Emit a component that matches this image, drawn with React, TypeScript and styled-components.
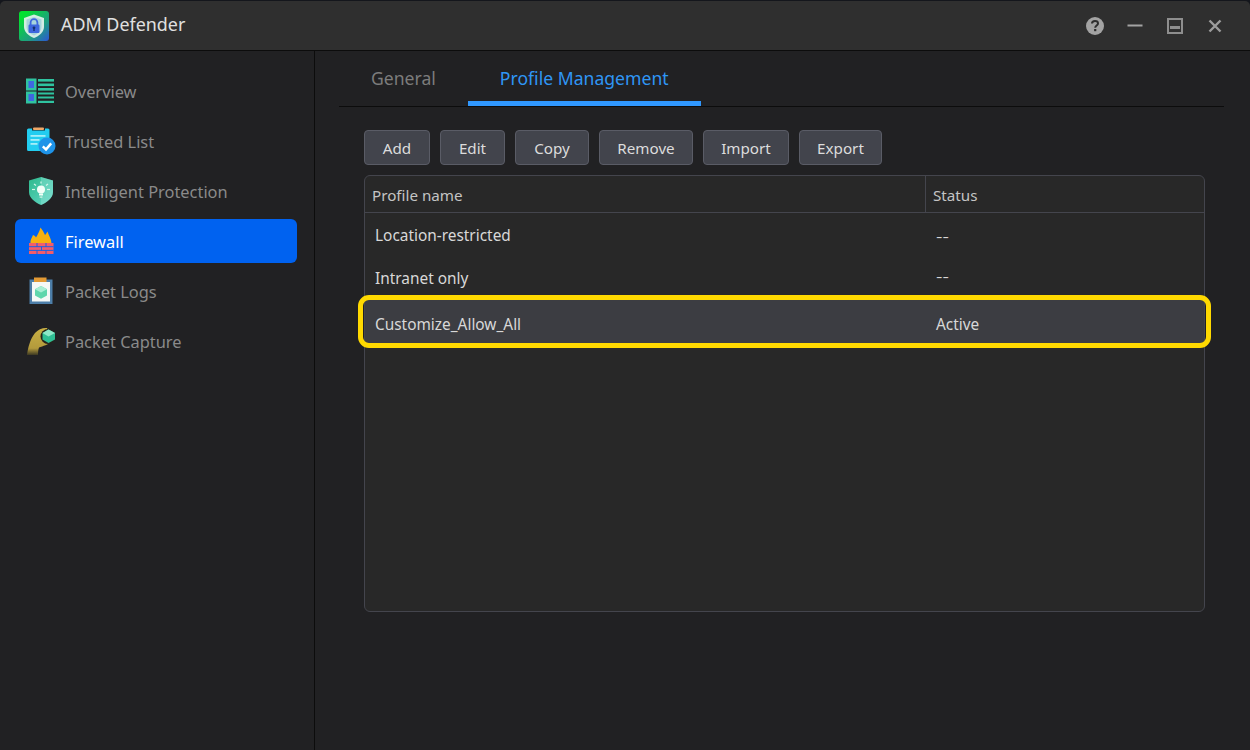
import React from 'react';
import styled, { createGlobalStyle } from 'styled-components';

const GlobalStyle = createGlobalStyle`
  html, body {
    margin: 0;
    padding: 0;
    background: #14161c;
  }
  body {
    font-family: "Noto Sans", "Open Sans", sans-serif;
  }
  * {
    box-sizing: border-box;
  }
`;

const AppLogo = () => (
  <svg width="30" height="30" viewBox="0 0 30 30">
    <defs>
      <linearGradient id="logoBg" x1="0" y1="0" x2="1" y2="1">
        <stop offset="0.15" stopColor="#03e032" />
        <stop offset="0.65" stopColor="#1f9c82" />
        <stop offset="1" stopColor="#2b55d6" />
      </linearGradient>
    </defs>
    <rect width="30" height="30" rx="3" fill="url(#logoBg)" />
    <path d="M15 3.500 L25 7 V16 C25 21 20 25 15 27 C10 25 5 21 5 16 V7 Z" fill="#e4f2ee" opacity="0.92" />
    <path d="M15 6 L22.500 8.600 V16 C22.500 19.800 19 22.800 15 24.400 C11 22.800 7.500 19.800 7.500 16 V8.600 Z" fill="#a8d4dc" />
    <path d="M11.600 14 V11.600 A3.400 3.400 0 0 1 18.400 11.600 V14" fill="none" stroke="#3e66de" strokeWidth="1.800" />
    <rect x="9.500" y="13.500" width="11" height="8.500" rx="1.200" fill="#3e66de" />
    <circle cx="15" cy="16.800" r="1.400" fill="#16306f" />
    <rect x="14.300" y="17" width="1.400" height="3" fill="#16306f" />
  </svg>
);

const OverviewIcon = () => (
  <svg width="30" height="26" viewBox="1 0 30 26">
    <rect x="1" y="0.500" width="10.500" height="12" fill="#2fc3a0" />
    <rect x="3.500" y="3" width="5.500" height="7" fill="#3f67e0" />
    <rect x="1" y="13.500" width="10.500" height="12" fill="#2fc3a0" />
    <rect x="3.500" y="16" width="5.500" height="7" fill="#3f67e0" />
    <g fill="#2fc3a0">
      <rect x="13" y="1" width="16" height="2.600" />
      <rect x="13" y="5.500" width="16" height="2.600" />
      <rect x="13" y="10" width="16" height="2.600" />
      <rect x="13" y="14.500" width="16" height="2" />
      <rect x="13" y="18.500" width="16" height="2" />
      <rect x="13" y="22.800" width="16" height="2.200" />
    </g>
  </svg>
);

const TrustedIcon = () => (
  <svg width="30" height="28" viewBox="0 0 30 28">
    <path d="M1 3 Q1 1.500 2.500 1.500 H6 V3.500 H19 V1.500 H22 Q23.500 1.500 23.500 3 V24 H2.500 Q1 24 1 22.500 Z" fill="#22cdf0" />
    <rect x="7" y="0.500" width="11" height="2.500" rx="1" fill="#f0a868" />
    <g fill="#a6eef8">
      <rect x="4.500" y="8" width="15" height="1.800" />
      <rect x="4.500" y="12" width="9" height="1.800" />
      <rect x="4.500" y="16" width="7" height="1.800" />
    </g>
    <circle cx="21" cy="19" r="8.500" fill="#1e93e8" />
    <path d="M16.800 19.300 L20 22.400 L25.200 16.400" fill="none" stroke="#fff" strokeWidth="2.400" />
  </svg>
);

const ProtectionIcon = () => (
  <svg width="28" height="30" viewBox="0 0 28 30">
    <defs>
      <linearGradient id="shieldFill" x1="0" y1="0" x2="1" y2="1">
        <stop offset="0" stopColor="#2eb98c" />
        <stop offset="1" stopColor="#66d8c8" />
      </linearGradient>
    </defs>
    <path d="M14 1 L26 4.500 V16 C26 22 20 26.500 14 29 C8 26.500 2 22 2 16 V4.500 Z" fill="url(#shieldFill)" />
    <path d="M14 1 L26 4.500 V16 C26 22 20 26.500 14 29 Z" fill="#9fe8dc" opacity="0.35" />
    <circle cx="14" cy="13.500" r="4" fill="#f2fff8" />
    <rect x="12" y="17.500" width="4" height="2" fill="#f2fff8" />
    <rect x="12.600" y="20.500" width="2.800" height="1.200" fill="#d6f5ea" />
    <g stroke="#d6f5ea" strokeWidth="1.200">
      <path d="M14 5.500 V7.500" />
      <path d="M5 13.500 H8" />
      <path d="M20 13.500 H23" />
      <path d="M7 8 L9 9.500" />
      <path d="M21 8 L19 9.500" />
    </g>
  </svg>
);

const FirewallIcon = () => (
  <svg width="28" height="28" viewBox="0 0 28 28">
    <path d="M3.500 16.500 C3 13 5 11 6 8 C7.500 8.500 8.500 9.500 9 10.500 C10.500 8 12.500 4.500 13.500 0.500 C15.500 3 17 5.500 18 8 C19 7 20 5.500 20.500 4.500 C21.500 8 24.500 12 24.500 16.500 Z" fill="#f7b00e" />
    <rect x="2" y="16" width="24.500" height="11" fill="#f25c6a" />
    <g stroke="#0062f0" strokeWidth="0.900">
      <path d="M2 19.700 H26.500" />
      <path d="M2 23.400 H26.500" />
      <path d="M10 16 V19.700" />
      <path d="M19 16 V19.700" />
      <path d="M14.500 19.700 V23.400" />
      <path d="M10 23.400 V27" />
      <path d="M19 23.400 V27" />
    </g>
  </svg>
);

const LogsIcon = () => (
  <svg width="26" height="28" viewBox="0 0 26 28">
    <rect x="1.500" y="2.500" width="23" height="24.500" fill="#4d7ea8" />
    <rect x="4" y="5" width="18" height="19.500" fill="#f5f8f6" />
    <rect x="6" y="0.500" width="12.500" height="4.500" fill="#e39a34" />
    <path d="M13 9 L19 12.200 V18.500 L13 21.800 L7 18.500 V12.200 Z" fill="#5fd6ac" />
    <path d="M13 9 L19 12.200 L13 15.400 L7 12.200 Z" fill="#a8eed4" />
  </svg>
);

const CaptureIcon = () => (
  <svg width="30" height="30" viewBox="0 0 30 30">
    <defs>
      <linearGradient id="handFill" x1="0" y1="0" x2="0" y2="1">
        <stop offset="0" stopColor="#c9b044" />
        <stop offset="0.75" stopColor="#b39a3c" />
        <stop offset="1" stopColor="#3c3822" />
      </linearGradient>
    </defs>
    <path d="M1 29 C2 22 4 13 9 7 C12 3.500 17 1.500 21 2 L26 15 C22 19 17 20 13 21.500 C12 24 12 27 12 29 Z" fill="url(#handFill)" />
    <circle cx="22" cy="10.500" r="7.500" fill="#26241c" />
    <path d="M22.500 3.500 L29 7 V13.500 L22.500 17 L16.500 13.500 V7 Z" fill="#2fbf94" />
    <path d="M22.500 3.500 L29 7 L22.500 10.500 L16.500 7 Z" fill="#8ce8c8" />
  </svg>
);

const navItems = [
  { label: 'Overview', icon: <OverviewIcon /> },
  { label: 'Trusted List', icon: <TrustedIcon /> },
  { label: 'Intelligent Protection', icon: <ProtectionIcon /> },
  { label: 'Firewall', icon: <FirewallIcon />, active: true },
  { label: 'Packet Logs', icon: <LogsIcon /> },
  { label: 'Packet Capture', icon: <CaptureIcon /> },
];

const buttons = [
  { label: 'Add', width: 66 },
  { label: 'Edit', width: 65 },
  { label: 'Copy', width: 74 },
  { label: 'Remove', width: 94 },
  { label: 'Import', width: 86 },
  { label: 'Export', width: 83 },
];

const rows = [
  { name: 'Location-restricted', status: '--', height: 44, top: 0, bottom: 0, lift: 0 },
  { name: 'Intranet only', status: '--', height: 43, top: 0, bottom: 1, lift: 5 },
  { name: 'Customize_Allow_All', status: 'Active', height: 43, top: 6, bottom: 0, lift: 0, selected: true },
];

const App: React.FC = () => {
  return (
    <>
      <GlobalStyle />
      <Window>
        <TitleBar>
          <TitleLeft>
            <AppLogo />
            <AppTitle>ADM Defender</AppTitle>
          </TitleLeft>
          <TitleActions>
            <WindowButton aria-label="Help">
              <svg width="20" height="20" viewBox="0 0 20 20">
                <circle cx="10" cy="10" r="9" fill="#a3a3a3" />
                <path d="M7 7.600 C7 5.800 8.400 5 10 5 C11.800 5 13 6 13 7.400 C13 9.400 10.200 9.500 10.200 11.700" fill="none" stroke="#2f2f2f" strokeWidth="2" />
                <rect x="9.100" y="13" width="2.200" height="2.200" fill="#2f2f2f" />
              </svg>
            </WindowButton>
            <WindowButton aria-label="Minimize">
              <svg width="20" height="20" viewBox="0 0 20 20">
                <rect x="2.500" y="8.500" width="15" height="2" fill="#a3a3a3" />
              </svg>
            </WindowButton>
            <WindowButton aria-label="Maximize">
              <svg width="20" height="20" viewBox="0 0 20 20">
                <rect x="3" y="3" width="14" height="14" fill="none" stroke="#8e8e8e" strokeWidth="2" />
                <rect x="5" y="10" width="10" height="3" fill="#8e8e8e" />
              </svg>
            </WindowButton>
            <WindowButton aria-label="Close">
              <svg width="20" height="20" viewBox="0 0 20 20">
                <path d="M4.500 4.500 L15.500 15.500 M15.500 4.500 L4.500 15.500" stroke="#9c9c9c" strokeWidth="2.400" />
              </svg>
            </WindowButton>
          </TitleActions>
        </TitleBar>
        <Body>
          <Sidebar>
            {navItems.map((item) => (
              <NavItem key={item.label} $active={item.active}>
                <NavIcon>{item.icon}</NavIcon>
                {item.label}
              </NavItem>
            ))}
          </Sidebar>
          <Main>
            <Tabs>
              <Tab>General</Tab>
              <Tab $active>Profile Management</Tab>
            </Tabs>
            <Content>
              <Toolbar>
                {buttons.map((button) => (
                  <ToolButton key={button.label} $width={button.width}>
                    {button.label}
                  </ToolButton>
                ))}
              </Toolbar>
              <Table>
                <HeaderRow>
                  <HeaderCell>Profile name</HeaderCell>
                  <HeaderCell>Status</HeaderCell>
                </HeaderRow>
                {rows.map((row) => (
                  <Row
                    key={row.name}
                    $selected={row.selected}
                    $height={row.height}
                    $top={row.top}
                    $bottom={row.bottom}
                  >
                    <Cell>{row.name}</Cell>
                    <Cell $dash={row.status === '--'} $lift={row.lift}>
                      {row.status}
                    </Cell>
                  </Row>
                ))}
              </Table>
            </Content>
          </Main>
        </Body>
      </Window>
    </>
  );
};

const Window = styled.div`
  width: 1250px;
  height: 750px;
  display: flex;
  flex-direction: column;
  overflow: hidden;
  padding-top: 1px;
`;

const TitleBar = styled.header`
  height: 50px;
  flex-shrink: 0;
  display: flex;
  align-items: center;
  justify-content: space-between;
  padding: 0 25px 0 19px;
  background: #2f2f2f;
  border-bottom: 1px solid #0c0c0c;
  border-radius: 5px 5px 0 0;
`;

const TitleLeft = styled.div`
  display: flex;
  align-items: center;
  gap: 12px;
`;

const AppTitle = styled.span`
  font-size: 17.9px;
  color: #e0e0e0;
  padding-bottom: 3px;
`;

const TitleActions = styled.div`
  display: flex;
  align-items: center;
  gap: 20px;
`;

const WindowButton = styled.div`
  width: 20px;
  height: 20px;
  display: flex;
`;

const Body = styled.div`
  flex: 1;
  display: flex;
  background: #212123;
`;

const Sidebar = styled.nav`
  width: 315px;
  flex-shrink: 0;
  padding: 18px 17px 0 15px;
  display: flex;
  flex-direction: column;
  gap: 6px;
  border-right: 1px solid #0c0c0c;
`;

const NavItem = styled.div<{ $active?: boolean }>`
  height: 44px;
  display: flex;
  align-items: center;
  gap: 8px;
  padding-left: 10px;
  border-radius: 6px;
  font-size: 16.4px;
  color: ${(p) => (p.$active ? '#ffffff' : '#8a8a8a')};
  background: ${(p) => (p.$active ? '#0062f0' : 'transparent')};
`;

const NavIcon = styled.span`
  width: 32px;
  height: 30px;
  display: flex;
  align-items: center;
  justify-content: center;
  flex-shrink: 0;
`;

const Main = styled.main`
  flex: 1;
  padding: 0 26px 0 24px;
`;

const Tabs = styled.div`
  display: flex;
  height: 56px;
  border-bottom: 1px solid #0c0c0c;
`;

const Tab = styled.div<{ $active?: boolean }>`
  padding: 15px 32px 0;
  font-size: 17.6px;
  color: ${(p) => (p.$active ? '#2f96f5' : '#7c7c7c')};
  border-bottom: 5px solid ${(p) => (p.$active ? '#3098ff' : 'transparent')};
  height: 55px;
`;

const Content = styled.div`
  padding: 23px 19px 0 25px;
`;

const Toolbar = styled.div`
  display: flex;
  gap: 10px;
  margin-bottom: 10px;
`;

const ToolButton = styled.div<{ $width: number }>`
  width: ${(p) => p.$width}px;
  height: 35px;
  display: flex;
  align-items: center;
  justify-content: center;
  font-size: 15.2px;
  color: #dcdcdc;
  background: #42444c;
  border: 1px solid #5a5c66;
  border-radius: 4px;
`;

const Table = styled.div`
  height: 437px;
  background: #282828;
  border: 1px solid #44454d;
  border-radius: 6px;
`;

const HeaderRow = styled.div`
  height: 37px;
  display: grid;
  grid-template-columns: 560px 1fr;
  border-bottom: 1px solid #44454d;
`;

const HeaderCell = styled.div`
  display: flex;
  align-items: center;
  padding: 2px 0 0 7px;
  font-size: 15.2px;
  color: #c4c4c4;
  & + & {
    border-left: 1px solid #44454d;
  }
`;

const Row = styled.div<{ $selected?: boolean; $height: number; $top: number; $bottom: number }>`
  position: relative;
  height: ${(p) => p.$height}px;
  padding: ${(p) => p.$top}px 0 ${(p) => p.$bottom}px;
  display: grid;
  grid-template-columns: 561px 1fr;
  align-items: center;
  background: ${(p) => (p.$selected ? '#3c3d42' : 'transparent')};
  ${(p) =>
    p.$selected &&
    `
    &::after {
      content: '';
      position: absolute;
      inset: -5px -7px -5px -7px;
      border: 5px solid #ffd900;
      border-radius: 11px;
    }
  `}
`;

const Cell = styled.div<{ $dash?: boolean; $lift?: number }>`
  padding: 0 0 ${(p) => p.$lift || 0}px 10px;
  font-size: ${(p) => (p.$dash ? '20px' : '15.4px')};
  font-weight: ${(p) => (p.$dash ? 300 : 400)};
  color: #d8d8d8;
`;

export default App;
